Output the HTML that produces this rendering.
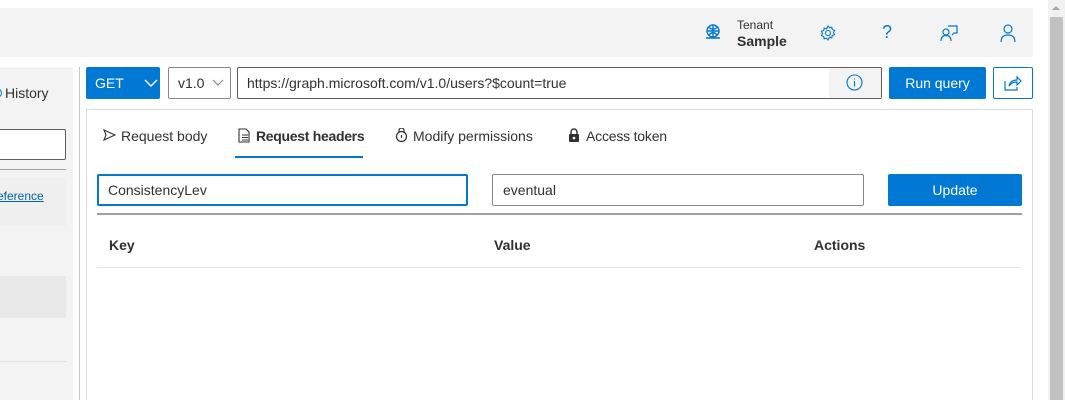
<!DOCTYPE html>
<html style="width:1065px;height:400px;overflow:hidden"><head><style>
*{box-sizing:border-box;margin:0;padding:0}
body{width:1065px;height:400px;background:#fff;font-family:"Liberation Sans",sans-serif;position:relative;overflow:hidden;color:#323130}
.a{position:absolute}
.hdr{left:0;top:8px;width:1033px;height:49px;background:#f3f3f3}
.btn{background:#0078d4;color:#fff;font-size:14px;display:flex;align-items:center}
.box{border:1px solid #8a8886;border-radius:2px;background:#fff;font-size:14px;display:flex;align-items:center}
svg{display:block}
</style></head><body>
<div class="a hdr"></div>
<svg class="a" style="left:704px;top:23px" width="18" height="18" viewBox="0 0 18 18" fill="none" stroke="#0078d4" stroke-width="1.4"><circle cx="9" cy="8" r="6"/><path d="M3 8h12M9 2v12M5 4c2 3 6 3 8 0M5 12c2-3 6-3 8 0M2 15h14"/></svg>
<div class="a" style="left:737px;top:18px;font-size:12px">Tenant</div>
<div class="a" style="left:737px;top:33px;font-size:14px;font-weight:bold;color:#323130">Sample</div>
<svg class="a" style="left:819px;top:24px" width="18" height="18" viewBox="0 0 18 18" fill="none" stroke="#0078d4" stroke-width="1.1"><circle cx="9" cy="9" r="2.5"/><path d="M9 2l1.5 1.8 2.3-.6.5 2.3 2.2.9-1 2.1 1 2.1-2.2.9-.5 2.3-2.3-.6L9 16l-1.5-1.8-2.3.6-.5-2.3-2.2-.9 1-2.1-1-2.1 2.2-.9.5-2.3 2.3.6z"/></svg>
<div class="a" style="left:882px;top:22px;font-size:18px;color:#0078d4">?</div>
<svg class="a" style="left:939px;top:23px" width="20" height="20" viewBox="0 0 20 20" fill="none" stroke="#0078d4" stroke-width="1.2"><circle cx="7" cy="9" r="3"/><path d="M2 18c0-4 2-5.5 5-5.5s5 1.5 5 5.5M9 3h9v7h-3l-2 2"/></svg>
<svg class="a" style="left:999px;top:23px" width="18" height="20" viewBox="0 0 18 20" fill="none" stroke="#0078d4" stroke-width="1.2"><circle cx="9" cy="6" r="4"/><path d="M2 19c0-5 3-7 7-7s7 2 7 7"/></svg>
<div class="a" style="left:1048px;top:0;width:17px;height:400px;background:#f1f1f1"></div>
<div class="a" style="left:1050px;top:17px;width:13px;height:383px;background:#c1c1c1"></div>
<div class="a" style="left:1052px;top:6px;width:0;height:0;border-left:4px solid transparent;border-right:4px solid transparent;border-bottom:4px solid #a3a3a3"></div>
<div class="a" style="left:0;top:67px;width:73px;height:333px;background:#f3f3f3"></div>
<div class="a" style="left:79px;top:67px;width:1px;height:333px;background:#c8c8c8"></div>
<div class="a" style="left:-8px;top:88px;width:10px;height:10px;border:1.3px solid #0078d4;border-radius:50%"></div>
<div class="a" style="left:5px;top:85px;font-size:14px">History</div>
<div class="a" style="left:-2px;top:129px;width:68px;height:31px;border:1px solid #605e5c;background:#fff;border-radius:2px"></div>
<div class="a" style="left:0;top:169px;width:66px;height:1px;background:#a0a0a0"></div>
<div class="a" style="left:0;top:178px;width:66px;height:48px;background:#efefef"></div>
<div class="a" style="left:-3px;top:189px;font-size:12px;color:#0062ad;text-decoration:underline">eference</div>
<div class="a" style="left:0;top:276px;width:66px;height:42px;background:#e8e8e8"></div>
<div class="a" style="left:0;top:361px;width:66px;height:1px;background:#e0e0e0"></div>
<div class="a btn" style="left:86px;top:67px;width:74px;height:32px;border-radius:2px;padding-left:9px">GET
<svg style="margin-left:20px" width="14" height="10" viewBox="0 0 14 10" fill="none" stroke="#fff" stroke-width="1.4"><path d="M1 2l6 6 6-6"/></svg></div>
<div class="a box" style="left:168px;top:67px;width:63px;height:32px;padding-left:9px;border-color:#8a8886">v1.0
<svg style="margin-left:8px" width="12" height="8" viewBox="0 0 12 8" fill="none" stroke="#8a8886" stroke-width="1.2"><path d="M1 1l5 5 5-5"/></svg></div>
<div class="a box" style="left:237px;top:67px;width:645px;height:32px;padding-left:9px;border-color:#605e5c">https://graph.microsoft.com/v1.0/users?$count=true</div>
<div class="a" style="left:829px;top:68px;width:52px;height:30px;background:#f3f3f3"></div>
<svg class="a" style="left:846px;top:74px" width="17" height="17" viewBox="0 0 17 17" fill="none" stroke="#0078d4" stroke-width="1.1"><circle cx="8.5" cy="8.5" r="7.5"/><path d="M8.5 7v5.5M8.5 4.5v1"/></svg>
<div class="a btn" style="left:889px;top:67px;width:97px;height:32px;border-radius:2px;justify-content:center">Run query</div>
<div class="a" style="left:993px;top:67px;width:40px;height:32px;border:1px solid #0078d4;border-radius:2px;background:#fff"></div>
<svg class="a" style="left:1004px;top:75px" width="18" height="16" viewBox="0 0 18 16" fill="none" stroke="#0078d4" stroke-width="1.2"><path d="M1 6v9h12v-3M5 11c1-4 4-6 8-6V2l4 4-4 4V7c-3 0-6 1-8 4z"/></svg>
<div class="a" style="left:86px;top:109px;width:947px;height:291px;border:1px solid #dcdcdc;border-bottom:none"></div>
<svg class="a" style="left:103px;top:129px" width="13" height="12" viewBox="0 0 13 12" fill="none" stroke="#323130" stroke-width="1.1"><path d="M1 1l11 5-11 5 2-5z"/></svg>
<div class="a" style="left:121px;top:128px;font-size:14px">Request body</div>
<svg class="a" style="left:238px;top:128px" width="13" height="15" viewBox="0 0 13 15" fill="none" stroke="#323130" stroke-width="1.1"><path d="M1 1h7l3 3v10H1zM4 7h6M4 9.5h6M4 12h6"/></svg>
<div class="a" style="left:256px;top:128px;font-size:14px;font-weight:bold;letter-spacing:-0.3px">Request headers</div>
<div class="a" style="left:235px;top:156px;width:128px;height:2px;background:#0078d4"></div>
<svg class="a" style="left:395px;top:128px" width="13" height="15" viewBox="0 0 13 15" fill="none" stroke="#323130" stroke-width="1.2"><circle cx="6.5" cy="8.5" r="5"/><path d="M4 4V2.5a2.5 2.5 0 015 0V4M6.5 7v3"/></svg>
<div class="a" style="left:413px;top:128px;font-size:14px">Modify permissions</div>
<svg class="a" style="left:568px;top:128px" width="12" height="15" viewBox="0 0 12 15"><path d="M3 6V4a3 3 0 016 0v2" fill="none" stroke="#323130" stroke-width="1.4"/><rect x="1" y="6" width="10" height="8" rx="1" fill="#323130"/><circle cx="6" cy="10" r="1.3" fill="#fff"/></svg>
<div class="a" style="left:586px;top:128px;font-size:14px;letter-spacing:-0.2px">Access token</div>
<div class="a box" style="left:97px;top:174px;width:371px;height:32px;border:2px solid #0078d4;padding-left:9px">ConsistencyLev</div>
<div class="a box" style="left:492px;top:174px;width:372px;height:32px;padding-left:10px">eventual</div>
<div class="a btn" style="left:888px;top:174px;width:134px;height:32px;border-radius:2px;justify-content:center">Update</div>
<div class="a" style="left:97px;top:213px;width:925px;height:2px;background:#a0a0a0"></div>
<div class="a" style="left:109px;top:237px;font-size:14px;font-weight:bold">Key</div>
<div class="a" style="left:494px;top:237px;font-size:14px;font-weight:bold">Value</div>
<div class="a" style="left:814px;top:237px;font-size:14px;font-weight:bold">Actions</div>
<div class="a" style="left:97px;top:267px;width:925px;height:1px;background:#e6e6e6"></div>
</body></html>
